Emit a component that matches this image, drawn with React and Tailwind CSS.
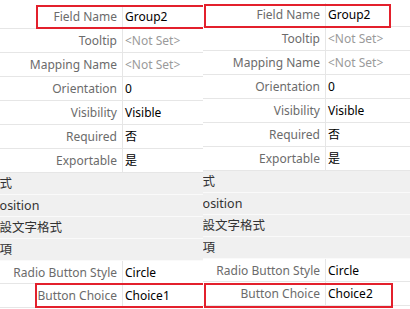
import React from 'react';

const props = [
  { label: 'Field Name', value: 'Group2' },
  { label: 'Tooltip', value: '<Not Set>', muted: true },
  { label: 'Mapping Name', value: '<Not Set>', muted: true },
  { label: 'Orientation', value: '0' },
  { label: 'Visibility', value: 'Visible' },
  { label: 'Required', value: '否' },
  { label: 'Exportable', value: '是' },
];

const categories = [
  { text: '樣式', shift: '-ml-[13px]' },
  { text: 'Position', shift: '-ml-[8px]' },
  { text: '預設文字格式', shift: '-ml-[13px]' },
  { text: '選項', shift: '-ml-[13px]' },
];

function PropRow({ label, value, muted, tall }) {
  return (
    <div className={`flex border-b border-[#e6e6e6] ${tall ? 'h-[24px]' : 'h-[23px]'}`}>
      <div className="w-[123px] shrink-0 border-r border-[#e6e6e6] pr-[5px] text-right text-[#6b6b6b] leading-[23px] whitespace-nowrap">
        {label}
      </div>
      <div className={`pl-[2px] leading-[23px] whitespace-nowrap ${muted ? 'text-[#9a9a9a]' : 'text-black'}`}>
        {value}
      </div>
    </div>
  );
}

function CategoryRow({ text, shift }) {
  return (
    <div className="h-[22px] bg-[#f0f0f0] border-b border-[#fafafa] overflow-hidden whitespace-nowrap text-[12.5px]">
      <span className={`inline-block ${shift} leading-[21px] text-[#333]`}>{text}</span>
    </div>
  );
}

function Panel({ choice, top, className, boxes }) {
  return (
    <div className={`relative overflow-hidden ${className}`}>
      <div className={top}>
        {props.map((p) => (
          <PropRow key={p.label} {...p} tall />
        ))}
        {categories.map((c) => (
          <CategoryRow key={c.text} {...c} />
        ))}
        <PropRow label="Radio Button Style" value="Circle" />
        <PropRow label="Button Choice" value={choice} tall />
      </div>
      {boxes}
    </div>
  );
}

export default function App() {
  return (
    <div
      className="flex w-[410px] h-[309px] overflow-hidden bg-white text-[12px]"
      style={{ fontFamily: '"Segoe UI", "Noto Sans", "Noto Sans CJK TC", sans-serif' }}
    >
      <Panel
        className="w-[203px] shrink-0"
        top="pt-[5px]"
        choice="Choice1"
        boxes={
          <>
            <div className="absolute left-[36px] top-[5px] w-[180px] h-[24px] border-2 border-[#e3202c]" />
            <div className="absolute left-[35px] top-[283px] w-[180px] h-[25px] border-2 border-[#e3202c]" />
          </>
        }
      />
      <Panel
        className="flex-1"
        top="pt-[3px]"
        choice="Choice2"
        boxes={
          <>
            <div className="absolute left-[1px] top-[4px] w-[187px] h-[24px] border-2 border-[#e3202c]" />
            <div className="absolute left-[1px] top-[283px] w-[189px] h-[25px] border-2 border-[#e3202c]" />
          </>
        }
      />
    </div>
  );
}
